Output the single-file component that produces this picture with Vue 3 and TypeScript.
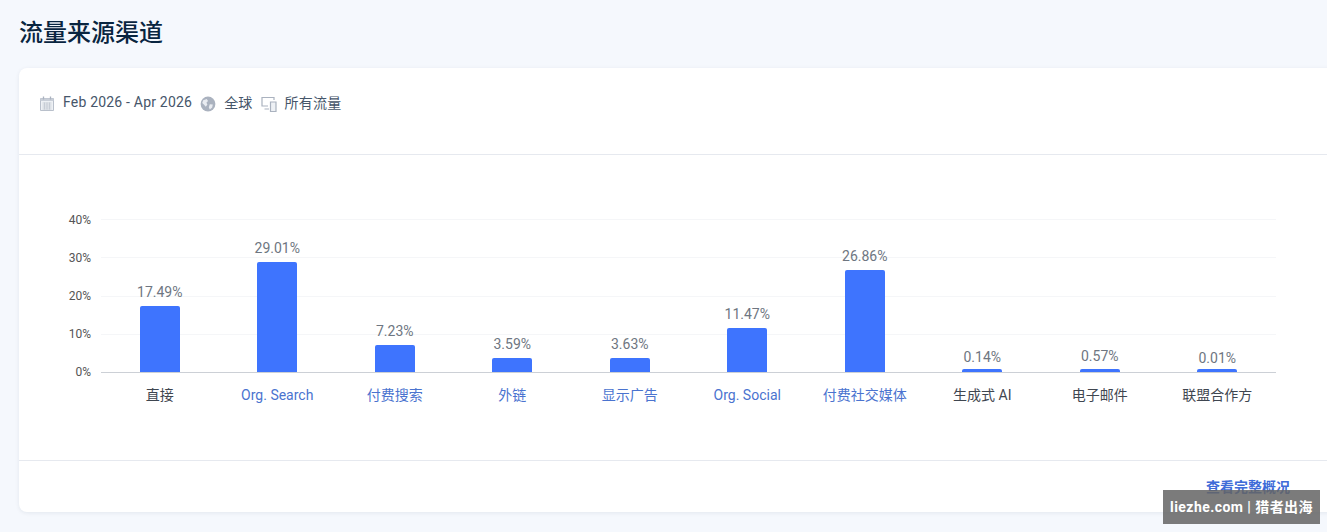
<script setup lang="ts">
interface Channel {
  name: string;
  value: number;
  link?: boolean;
}

const PX_PER_PERCENT = 3.8;
const MIN_BAR = 3;

const channels: Channel[] = [
  { name: '直接', value: 17.49 },
  { name: 'Org. Search', value: 29.01, link: true },
  { name: '付费搜索', value: 7.23, link: true },
  { name: '外链', value: 3.59, link: true },
  { name: '显示广告', value: 3.63, link: true },
  { name: 'Org. Social', value: 11.47, link: true },
  { name: '付费社交媒体', value: 26.86, link: true },
  { name: '生成式 AI', value: 0.14 },
  { name: '电子邮件', value: 0.57 },
  { name: '联盟合作方', value: 0.01 }
];

const ticks = ['40%', '30%', '20%', '10%', '0%'];

// very small values still draw a 3px stub, but their label stays where the value puts it
function barStyle(value: number) {
  const h = value * PX_PER_PERCENT;
  const drawn = Math.max(h, MIN_BAR);
  return { height: `${drawn}px`, marginTop: `${h - drawn}px` };
}
</script>

<template>
  <div class="page">
    <h1 class="title">流量来源渠道</h1>

    <section class="card">
      <div class="filters">
        <span class="filter">
          <svg class="icon cal" viewBox="0 0 14 15" width="14" height="15">
            <path d="M.5 2.5h13v12H.5z" fill="#eef1f5" stroke="#b9c0cb" stroke-width="1" />
            <path d="M.5 2.5h13v2.5H.5z" fill="#c9cfd8" />
            <path d="M3.5 .5v3M10.5 .5v3" stroke="#aab2bf" stroke-width="1.3" />
            <path d="M2.5 7h9M2.5 9h9M2.5 11h9M2.5 13h9M4.5 6.5v7M7 6.5v7M9.5 6.5v7" stroke="#bcc3cd" stroke-width=".7" />
          </svg>
          Feb 2026 - Apr 2026
        </span>
        <span class="filter">
          <svg class="icon" viewBox="0 0 16 16" width="16" height="16">
            <circle cx="8" cy="8" r="7.4" fill="#aab2bf" />
            <path d="M3.2 4.2 6.8 3 8 5 6.4 6.8 7.4 8.6 5.8 10.8 3.6 8.2 2.2 7zM9.8 8.2l3 .4-.6 3-2.4 2-1-2.4z" fill="#e9ecf1" />
          </svg>
          全球
        </span>
        <span class="filter">
          <svg class="icon" viewBox="0 0 16 16" width="16" height="16">
            <path d="M13 4V1.5H1v8.5h6M3.5 13H8" fill="none" stroke="#aab2bf" stroke-width="1.2" />
            <path d="M9.5 6h5.5v9.5H9.5z" fill="#eef1f5" stroke="#aab2bf" stroke-width="1.2" />
          </svg>
          所有流量
        </span>
      </div>

      <div class="chart-wrap">
        <div class="chart">
          <div class="y-axis">
            <span v-for="tick in ticks" :key="tick" class="tick">{{ tick }}</span>
          </div>
          <div class="main">
            <div class="plot">
              <div class="grid-lines">
                <i v-for="tick in ticks" :key="tick" class="grid-line"></i>
              </div>
              <div class="columns">
                <div v-for="c in channels" :key="c.name" class="column">
                  <span class="value">{{ c.value }}%</span>
                  <div class="bar" :style="barStyle(c.value)"></div>
                </div>
              </div>
            </div>
            <div class="x-axis">
              <span v-for="c in channels" :key="c.name" class="x-label" :class="{ link: c.link }">{{ c.name }}</span>
            </div>
          </div>
        </div>
      </div>

      <footer class="card-footer">
        <a class="full-link">查看完整概况</a>
      </footer>
    </section>

    <div class="watermark">liezhe.com | 猎者出海</div>
  </div>
</template>

<style>
html,
body {
  margin: 0;
  overflow: hidden;
  background: #f5f8fd;
}
</style>

<style scoped>
.page {
  position: relative;
  width: 1327px;
  height: 532px;
  box-sizing: border-box;
  padding: 0 0 0 19px;
  overflow: hidden;
  background: #f5f8fd;
  font-family: Roboto, 'Noto Sans CJK SC', sans-serif;
}

.title {
  margin: 0;
  height: 68px;
  padding-top: 16px;
  box-sizing: border-box;
  font-size: 24px;
  line-height: 34px;
  font-weight: 500;
  color: #092540;
}

.card {
  width: 1330px;
  height: 444px;
  display: flex;
  flex-direction: column;
  background: #fff;
  border-radius: 8px;
  box-shadow: 0 1px 4px rgba(9, 37, 64, 0.08);
}

.filters {
  height: 87px;
  box-sizing: border-box;
  display: flex;
  align-items: flex-start;
  gap: 8px;
  padding: 24px 0 0 21px;
  border-bottom: 1px solid #e6e9ef;
}

.filter {
  display: flex;
  align-items: center;
  gap: 8px;
  height: 20px;
  font-size: 14px;
  letter-spacing: 0.2px;
  color: #46566a;
}

.icon {
  flex: none;
  margin-top: 3px;
}

.cal {
  margin-right: 1px;
}

.chart-wrap {
  flex: 1;
  padding: 64px 0 0 48px;
  border-bottom: 1px solid #e6e9ef;
}

.chart {
  display: flex;
  width: 1209px;
}

.y-axis {
  width: 24px;
  height: 168px;
  margin-top: -7px;
  margin-right: 10px;
  flex: none;
  display: flex;
  flex-direction: column;
  justify-content: space-between;
  align-items: flex-end;
}

.tick {
  font-size: 12px;
  line-height: 16px;
  color: #555;
}

.main {
  flex: 1;
}

.plot {
  position: relative;
  height: 153px;
  border-bottom: 1px solid #ccd0d6;
}

.grid-lines {
  position: absolute;
  inset: 0 0 -1px 0;
  display: flex;
  flex-direction: column;
  justify-content: space-between;
}

.grid-line {
  display: block;
  height: 1px;
  background: #f5f6f8;
}

.grid-line:last-child {
  background: transparent;
}

.columns {
  position: relative;
  height: 100%;
  display: grid;
  grid-template-columns: repeat(10, 1fr);
}

.column {
  display: flex;
  flex-direction: column;
  align-items: center;
  justify-content: flex-end;
}

.value {
  margin-bottom: 6px;
  font-size: 14px;
  line-height: 16px;
  color: #6e7681;
}

.bar {
  width: 40px;
  flex: none;
  background: #3e74fe;
  border-radius: 2px 2px 0 0;
}

.x-axis {
  display: grid;
  grid-template-columns: repeat(10, 1fr);
  margin-top: 12px;
}

.x-label {
  text-align: center;
  font-size: 14px;
  line-height: 20px;
  color: #3f4650;
}

.x-label.link {
  color: #4a73cf;
}

.card-footer {
  height: 51px;
  box-sizing: border-box;
  display: flex;
  justify-content: flex-end;
  padding: 16px 59px 0 0;
}

.full-link {
  font-size: 14px;
  line-height: 20px;
  font-weight: 700;
  color: #3e6bd8;
}

.watermark {
  position: absolute;
  left: 1163px;
  top: 490px;
  width: 157px;
  height: 34px;
  line-height: 34px;
  text-align: center;
  background: rgba(100, 100, 100, 0.85);
  color: #fff;
  font-size: 14px;
  font-weight: 700;
  letter-spacing: 0.45px;
  white-space: nowrap;
}
</style>
